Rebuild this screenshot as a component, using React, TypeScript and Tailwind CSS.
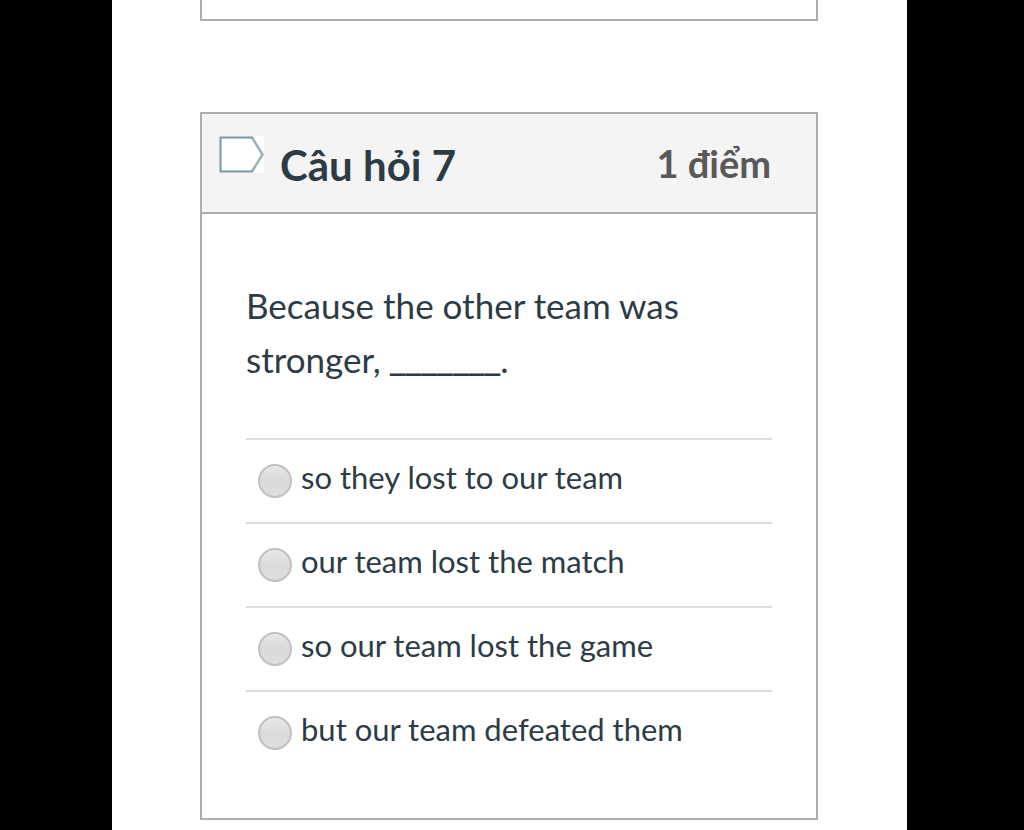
const answers = [
  "so they lost to our team",
  "our team lost the match",
  "so our team lost the game",
  "but our team defeated them",
];

const FlagIcon = () => (
  <svg width="45" height="37" viewBox="0 0 45 37" fill="none">
    <rect width="45" height="37" fill="#fff" />
    <path d="M33 1.5L43.5 18.5L33 35.5" stroke="#9fb0b9" strokeWidth="2.5" />
    <path d="M34 1.5H1.5V35.5H34" stroke="#7696a9" strokeWidth="2" />
  </svg>
);

const Answer = ({ id, text }: { id: string; text: string }) => {
  return (
    <div className="flex h-[84px] items-center border-t-2 border-[#dddddd] pl-3">
      <input
        type="radio"
        id={id}
        name="question-7"
        className="size-[34px] shrink-0 appearance-none rounded-full border-2 border-[#c2c0c0] bg-linear-to-b from-[#e8e8e8] via-[#dadada] to-[#dedede] checked:border-[#2d3b45]"
      />
      <label htmlFor={id} className="pb-2 pl-[9px] text-[31px] leading-10">
        {text}
      </label>
    </div>
  );
};

const App = () => {
  return (
    <div className="min-h-screen bg-black pr-[117px] pl-28 font-['Lato',sans-serif] text-[#2d3b45]">
      <main className="min-h-screen bg-white pr-[89px] pb-[10px] pl-[88px]">
        <div className="h-[21px] border-2 border-t-0 border-[#aeaeae]" />
        <section className="mt-[91px] border-2 border-[#aeaeae]">
          <header className="flex h-[100px] items-center justify-between border-b-2 border-[#aeaeae] bg-[#f4f4f4] pr-[45px] pl-[17px]">
            <div className="flex items-center gap-4">
              <button type="button" aria-label="Flag question" className="mb-[18px]">
                <FlagIcon />
              </button>
              <h2 className="pt-1 text-[42px] leading-[52px] font-bold">
                Câu hỏi 7
              </h2>
            </div>
            <span className="text-[38px] leading-[52px] font-bold text-[#595959]">
              1 điểm
            </span>
          </header>
          <div className="px-11 pt-16 pb-11">
            <p className="mb-[52px] text-[35px] leading-[54px]">
              Because the other team was stronger,{" "}
              <span className="font-['Roboto',sans-serif] leading-none">
                _______
              </span>
              .
            </p>
            <div>
              {answers.map((answer, index) => (
                <Answer key={index} id={`answer-${index}`} text={answer} />
              ))}
            </div>
          </div>
        </section>
      </main>
    </div>
  );
};

export default App;
